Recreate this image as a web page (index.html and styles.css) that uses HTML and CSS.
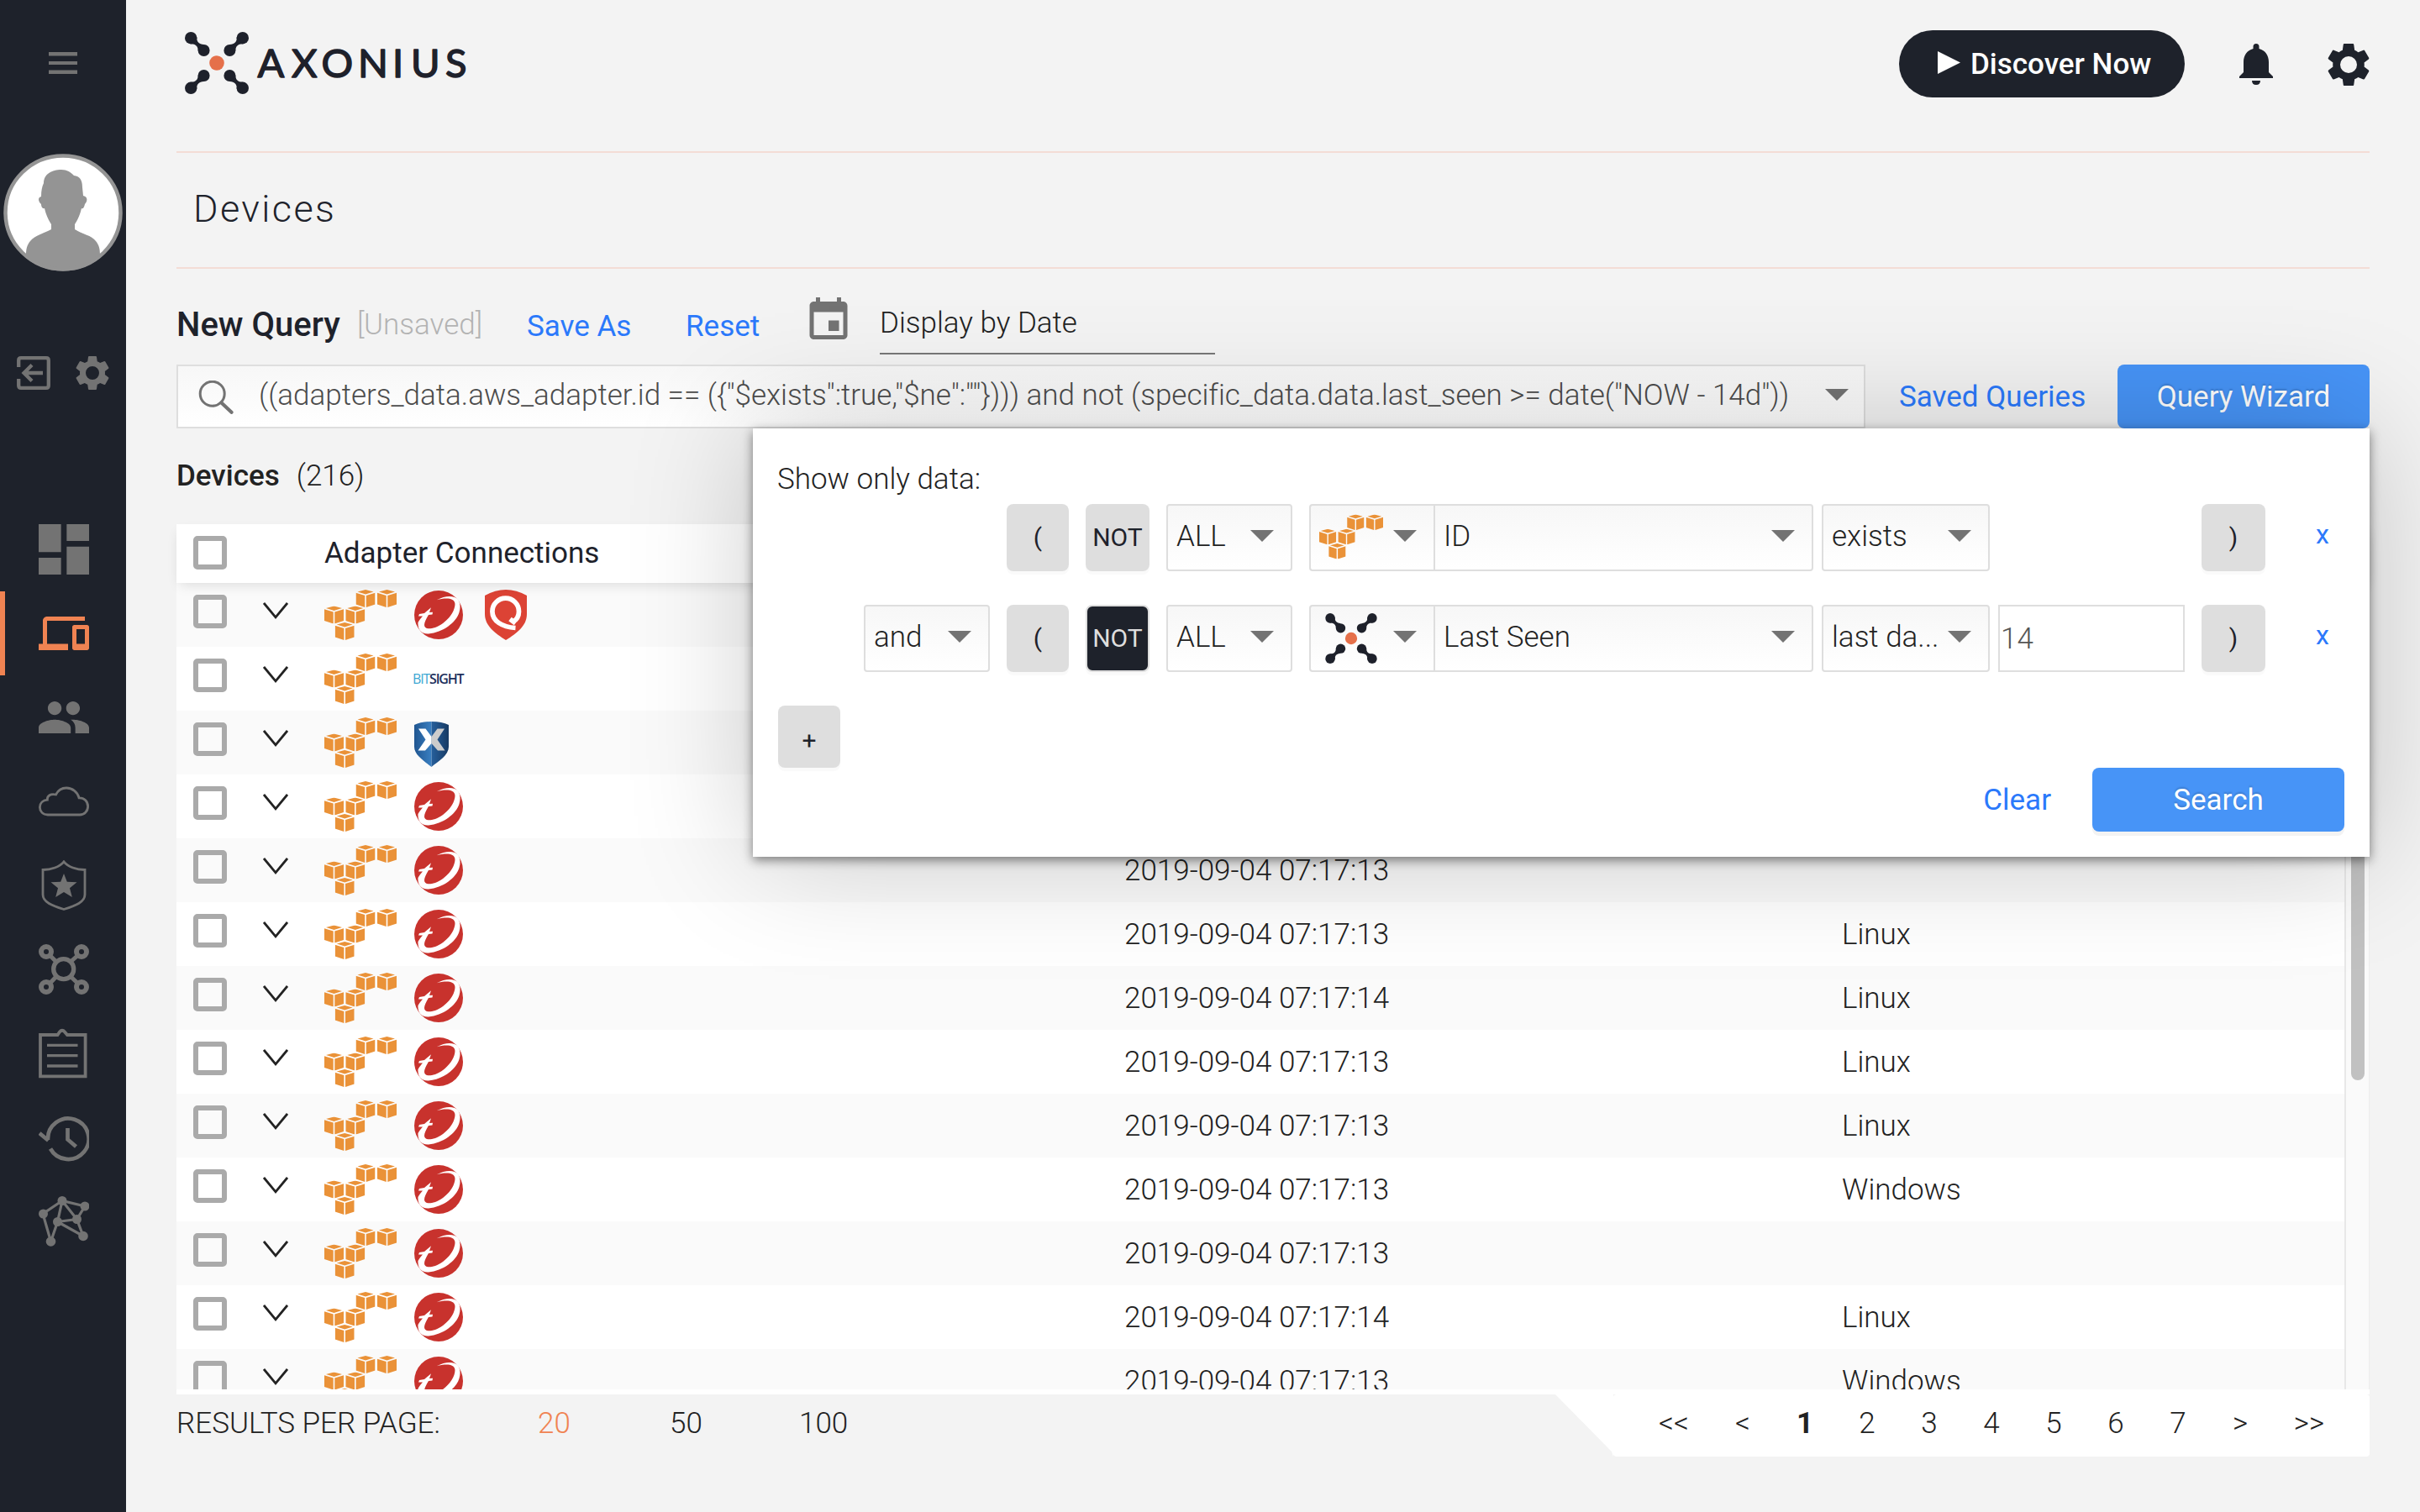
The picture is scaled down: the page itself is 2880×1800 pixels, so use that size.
FILE: index.html
```html
<!DOCTYPE html>
<html lang="en">
<head>
<meta charset="utf-8">
<title>Axonius - Devices</title>
<link rel="stylesheet" href="styles.css">
</head>
<body>
<svg class="sprite" aria-hidden="true">
  <defs>
    <linearGradient id="navy-left" x1="0" y1="0" x2="1" y2="0"><stop offset="0" stop-color="#1f5590"/><stop offset="1" stop-color="#3a80c2"/></linearGradient>
    <linearGradient id="navy-right" x1="0" y1="0" x2="1" y2="0"><stop offset="0" stop-color="#265f9c"/><stop offset="1" stop-color="#173a63"/></linearGradient>
  </defs>
  <symbol id="gear" viewBox="2 2 20 20"><path fill-rule="evenodd" d="M19.43 12.98c.04-.32.07-.64.07-.98s-.03-.66-.07-.98l2.11-1.65c.19-.15.24-.42.12-.64l-2-3.46c-.12-.22-.39-.3-.61-.22l-2.49 1c-.52-.4-1.08-.73-1.69-.98l-.38-2.65C14.46 2.18 14.25 2 14 2h-4c-.25 0-.46.18-.49.42l-.38 2.65c-.61.25-1.17.59-1.69.98l-2.49-1c-.23-.09-.49 0-.61.22l-2 3.46c-.13.22-.07.49.12.64l2.11 1.65c-.04.32-.07.65-.07.98s.03.66.07.98l-2.11 1.65c-.19.15-.24.42-.12.64l2 3.46c.12.22.39.3.61.22l2.49-1c.52.4 1.08.73 1.69.98l.38 2.65c.03.24.24.42.49.42h4c.25 0 .46-.18.49-.42l.38-2.65c.61-.25 1.17-.59 1.69-.98l2.49 1c.23.09.49 0 .61-.22l2-3.46c.12-.22.07-.49-.12-.64l-2.11-1.65zM12 16a4 4 0 1 1 0-8 4 4 0 0 1 0 8z"/></symbol>
  <symbol id="arm" viewBox="0 0 38 37"><circle cx="7.2" cy="7.2" r="7.2"/><circle cx="22.6" cy="22" r="7"/><path d="M14.3 6C13.600 12 17 14.500 22.500 15L15.600 22.500C15.800 17 12.500 14 6.500 14.300Z"/></symbol>
  <symbol id="ax-mark" viewBox="0 0 76 74">
    <g fill="#1e212b">
      <use href="#arm" width="38" height="37"/>
      <use href="#arm" width="38" height="37" transform="translate(76 0) scale(-1 1)"/>
      <use href="#arm" width="38" height="37" transform="translate(0 74) scale(1 -1)"/>
      <use href="#arm" width="38" height="37" transform="translate(76 74) scale(-1 -1)"/>
    </g>
    <circle cx="38" cy="37" r="8.800" fill="#e5704a"/>
  </symbol>
  <symbol id="cube" viewBox="0 0 23 21"><path d="M11.500 0L21 2.500L11.500 5.400L2 2.500ZM0 3.800L10.700 7V21L0 17.600ZM23 3.800L12.300 7V21L23 17.600Z"/></symbol>
  <symbol id="aws" viewBox="0 0 86 60"><g fill="#ea9238">
    <use href="#cube" x="37.500" y="0" width="23" height="21"/><use href="#cube" x="63" y="0" width="23" height="21"/>
    <use href="#cube" x="0" y="19.500" width="23" height="21"/><use href="#cube" x="25.300" y="19.500" width="23" height="21"/>
    <use href="#cube" x="12.700" y="39" width="23" height="21"/></g></symbol>
  <symbol id="trend" viewBox="0 0 58 58"><circle cx="29" cy="29" r="29" fill="#c8322d"/><path fill="#fff" d="M26.700 11.300C35 7 42 6 48 8C54 10 56 18 53.500 26C50 38 34 50 17 51.500C8 52 4 46 4.500 38C6 35 8 33 10 30.500L5 30.500L6 28L12 27L20 20.300L18 26L22 25.700L21.500 28.500L17 29C14 34 12 38 12 41C12 45.500 17 46.500 25 44C38 39 48.500 26 48.500 16C48 8.500 37 8.500 26.700 11.300Z"/></symbol>
  <symbol id="qshield" viewBox="0 0 50 60"><path fill="#dc4335" d="M0 7Q25 -7 50 7V29C50 43 38 52 25 60C12 52 0 43 0 29Z"/><path fill="none" stroke="#fff" stroke-width="5.700" d="M30 35L36.500 40M33 38.500C38 36 40.500 31 40.500 26A15.800 15.800 0 1 0 8.900 26C9 37 20 44.500 36.500 45.500"/></symbol>
  <symbol id="nexpose" viewBox="0 0 41 54"><path fill="url(#navy-left)" d="M20.500 0Q8 0 0 4V30C0 40 12 47 20.500 54Z"/><path fill="url(#navy-right)" d="M20.500 0Q33 0 41 4V30C41 40 29 47 20.500 54Z"/><path fill="#fff" d="M5 8.500H13.500L20.500 18V26L13 34.500H4.500L13.500 21.500Z"/><path fill="#ccc" d="M36 8.500H27.500L20.500 18V26L28 34.500H36.500L27.500 21.500Z"/></symbol>
  <symbol id="chevron" viewBox="0 0 30 20"><path fill="none" stroke="#222" stroke-width="2.800" d="M1 1L15 17.800L29 1"/></symbol>
  <symbol id="caret" viewBox="0 0 28 14"><path fill="#737373" d="M0 0H28L14 14Z"/></symbol>
</svg>
<div class="app">
  <aside class="sidebar">
    <svg class="menu" viewBox="0 0 34 26"><path d="M0 0H34V4.500H0ZM0 11H34V15H0ZM0 21.500H34V26H0Z"/></svg>
    <svg class="avatar" viewBox="0 0 142 140"><defs><clipPath id="face"><ellipse cx="71" cy="70" rx="70" ry="69.500"/></clipPath></defs><ellipse cx="71" cy="70" rx="68.700" ry="67.700" fill="#fff"/><path clip-path="url(#face)" fill="#949494" d="M48 35C48 24 58 19 69 19C76 19 80 22 84 26C91 27 94 31 94 40L95 50C101 51 100 57 97 60C96 64 95 66 93 65C91 74 88 79 85 84V90C94 96 105 97 110 104C114 109 115 113 115 121V140H27V121C27 113 28 109 32 104C38 97 48 95 57 90V84C54 79 51 74 49 65C46 66 45 62 45 60C41 56 41 52 45 51C45 44 46 39 48 35Z"/><ellipse cx="71" cy="70" rx="68.500" ry="67.500" fill="none" stroke="#949494" stroke-width="4.500"/></svg>
    <div class="account">
      <svg viewBox="0 0 40 40"><path fill="none" stroke="#737373" stroke-width="4.300" d="M2.200 13V5Q2.200 2.200 5 2.200H35Q37.800 2.200 37.800 5V35Q37.800 37.800 35 37.800H5Q2.200 37.800 2.200 35V27M31 20H8M18 10.500L8.500 20L18 29.500"/></svg>
      <svg><use href="#gear"/></svg>
    </div>
    <nav class="nav">
      <a><svg viewBox="3 3 18 18"><path d="M3 13h8V3H3v10zm0 8h8v-6H3v6zm10 0h8V11h-8v10zm0-18v6h8V3h-8z"/></svg></a>
      <a class="active"><svg viewBox="0 0 24 24"><path d="M4 6h18V4H4c-1.100 0-2 .9-2 2v11H0v3h14v-3H4V6zm19 2h-6c-.55 0-1 .45-1 1v10c0 .55.45 1 1 1h6c.55 0 1-.45 1-1V9c0-.55-.45-1-1-1zm-1 9h-4v-7h4v7z"/></svg></a>
      <a><svg viewBox="1 1 22 22"><path d="M16 11c1.660 0 2.990-1.340 2.990-3S17.660 5 16 5c-1.660 0-3 1.340-3 3s1.340 3 3 3zm-8 0c1.660 0 2.990-1.340 2.990-3S9.660 5 8 5C6.340 5 5 6.340 5 8s1.340 3 3 3zm0 2c-2.330 0-7 1.170-7 3.500V19h14v-2.500c0-2.330-4.670-3.500-7-3.500zm8 0c-.29 0-.62.02-.97.05 1.160.84 1.970 1.970 1.970 3.450V19h6v-2.500c0-2.330-4.670-3.500-7-3.500z"/></svg></a>
      <a><svg class="line" viewBox="0 0 60 60"><path stroke-width="2.800" d="M11 46C5 46 1.400 42 1.400 37C1.400 32 5 28.800 10.300 28.200C10 23.500 14 20.500 20.500 22C23 17 28 14 33 14C40 14 46.500 19 48 25.800C54 25.500 58.600 30 58.600 36C58.600 42 54 46 49 46Z"/></svg></a>
      <a><svg class="line" viewBox="0 0 60 60"><path stroke-width="2.800" d="M30 1.800C25 8 15 11.500 5 11.500V41C5 50 16 54 30 58.500C44 54 55 50 55 41V11.500C45 11.500 35 8 30 1.800Z"/><path class="solid" d="M30 16L33.800 25.800L45.500 26.300L37 33.200L39.800 44L30 38L20.200 44L23 33.200L14.500 26.300L26.200 25.800Z"/></svg></a>
      <a><svg class="line" viewBox="0 0 60 60"><g stroke-width="6"><circle cx="9" cy="9" r="6"/><circle cx="51" cy="9" r="6"/><circle cx="9" cy="51" r="6"/><circle cx="51" cy="51" r="6"/><circle cx="29.700" cy="29.700" r="12" stroke-width="5.300"/><path stroke-width="5" d="M13 13L21 21M47 13L38 21M13 47L21 38.500M47 47L38 38.500"/></g></svg></a>
      <a><svg class="line" viewBox="0 0 60 60"><path stroke-width="3.800" d="M2 8H22.500L25 4.500Q28 1 31 4.500L34 8H55.600V57.300H2Z"/><path stroke-width="3.300" d="M10 20.300H46.500M10 32.700H46.500M10 45H46.500"/></svg></a>
      <a><svg class="line" viewBox="0 0 60 60"><path stroke-width="4.700" d="M11 33A24.300 24.300 0 1 1 14 43.500M1 25L11.500 33.800M34.500 19V32.500L44.500 41"/></svg></a>
      <a><svg class="line" viewBox="0 0 60 60"><path stroke-width="3.200" d="M28 5.500L5 21L14.500 54L22.500 30.500L28 5.500L55 12L45.500 27.500L28 5.500M22.500 30.500L45.500 27.500L53 47.500L22.500 30.500"/><g class="solid"><circle cx="28" cy="5.500" r="5.500"/><circle cx="55" cy="12" r="5.500"/><circle cx="5.500" cy="21" r="5.500"/><circle cx="22.500" cy="30.500" r="5.500"/><circle cx="45.500" cy="27.500" r="5.500"/><circle cx="53" cy="47.500" r="5.800"/><circle cx="14.500" cy="54" r="5.800"/></g></svg></a>
    </nav>
  </aside>
  <main class="main">
    <header class="topbar">
      <svg class="logo" viewBox="0 0 340 74"><use href="#ax-mark" width="76" height="74"/><text x="86.500 127 162.500 206 247 269 310" y="54">AXONIUS</text></svg>
      <div class="top-actions">
        <button class="discover"><svg viewBox="0 0 27 27"><path d="M0 0L27 13.500L0 27Z"/></svg>Discover Now</button>
        <svg class="bell" viewBox="0 0 40 49"><path d="M16.500 6V3.500Q16.500 0 20 0Q23.500 0 23.500 3.500V6C31 8 35 14 35 22V34L40 39V41H0V39L5 34V22C5 14 9 8 16.500 6ZM15 44H25Q25 49 20 49Q15 49 15 44Z"/></svg>
        <svg class="cog"><use href="#gear"/></svg>
      </div>
    </header>
    <h1 class="title">Devices</h1>
    <section class="query-head">
      <span class="query-name">New Query</span>
      <span class="unsaved">[Unsaved]</span>
      <a class="link">Save As</a>
      <a class="link">Reset</a>
      <svg class="calendar" viewBox="3 1 18 20"><path d="M17 12h-5v5h5v-5zM16 1v2H8V1H6v2H5c-1.110 0-1.990.9-1.990 2L3 19c0 1.100.89 2 2 2h14c1.100 0 2-.9 2-2V5c0-1.100-.9-2-2-2h-1V1h-2zm3 18H5V8h14v11z"/></svg>
      <span class="date-field">Display by Date</span>
    </section>
    <section class="query-bar">
      <div class="search">
        <svg class="lens" viewBox="0 0 42 40"><circle cx="16.700" cy="15.700" r="14.500" stroke-width="3"/><path stroke-width="4.200" stroke-linecap="round" d="M27.500 26.500L39.500 37.800"/></svg>
        <span class="query-text">((adapters_data.aws_adapter.id == ({"$exists":true,"$ne":""}))) and not (specific_data.data.last_seen &gt;= date("NOW - 14d"))</span>
        <svg class="caret"><use href="#caret"/></svg>
      </div>
      <a class="link saved">Saved Queries</a>
      <button class="primary">Query Wizard</button>
      <div class="wizard">
        <div class="wizard-title">Show only data:</div>
        <div class="expression">
          <span></span>
          <button class="tog">(</button>
          <button class="tog">NOT</button>
          <div class="select">ALL<svg class="caret"><use href="#caret"/></svg></div>
          <div class="field">
            <div class="select adapter"><svg class="aws-small"><use href="#aws"/></svg><svg class="caret"><use href="#caret"/></svg></div>
            <div class="select">ID<svg class="caret"><use href="#caret"/></svg></div>
          </div>
          <div class="select">exists<svg class="caret"><use href="#caret"/></svg></div>
          <span></span>
          <button class="tog">)</button>
          <a class="remove">x</a>
        </div>
        <div class="expression">
          <div class="select">and<svg class="caret"><use href="#caret"/></svg></div>
          <button class="tog">(</button>
          <button class="tog on">NOT</button>
          <div class="select">ALL<svg class="caret"><use href="#caret"/></svg></div>
          <div class="field">
            <div class="select adapter"><svg class="ax-small"><use href="#ax-mark"/></svg><svg class="caret"><use href="#caret"/></svg></div>
            <div class="select">Last Seen<svg class="caret"><use href="#caret"/></svg></div>
          </div>
          <div class="select">last da...<svg class="caret"><use href="#caret"/></svg></div>
          <div class="value">14</div>
          <button class="tog">)</button>
          <a class="remove">x</a>
        </div>
        <button class="tog add">+</button>
        <div class="wizard-actions"><a class="link">Clear</a><button class="primary">Search</button></div>
      </div>
    </section>
    <div class="count"><b>Devices</b><span>(216)</span></div>
    <section class="table">
      <div class="row head"><i class="box"></i><span></span><span class="col-name">Adapter Connections</span></div>
      <div class="viewport">
        <div class="rows">
          <div class="row"><i class="box"></i><svg class="chev"><use href="#chevron"/></svg><div class="adapters"><svg class="aws"><use href="#aws"/></svg><svg class="trend"><use href="#trend"/></svg><svg class="qshield"><use href="#qshield"/></svg></div><span></span><span></span></div>
          <div class="row"><i class="box"></i><svg class="chev"><use href="#chevron"/></svg><div class="adapters"><svg class="aws"><use href="#aws"/></svg><span class="bitsight"><span class="bit">BIT</span><span class="sight">SIGHT</span></span></div><span></span><span></span></div>
          <div class="row"><i class="box"></i><svg class="chev"><use href="#chevron"/></svg><div class="adapters"><svg class="aws"><use href="#aws"/></svg><svg class="nexpose"><use href="#nexpose"/></svg></div><span></span><span></span></div>
          <div class="row"><i class="box"></i><svg class="chev"><use href="#chevron"/></svg><div class="adapters"><svg class="aws"><use href="#aws"/></svg><svg class="trend"><use href="#trend"/></svg></div><span></span><span></span></div>
          <div class="row"><i class="box"></i><svg class="chev"><use href="#chevron"/></svg><div class="adapters"><svg class="aws"><use href="#aws"/></svg><svg class="trend"><use href="#trend"/></svg></div><span>2019-09-04 07:17:13</span><span></span></div>
          <div class="row"><i class="box"></i><svg class="chev"><use href="#chevron"/></svg><div class="adapters"><svg class="aws"><use href="#aws"/></svg><svg class="trend"><use href="#trend"/></svg></div><span>2019-09-04 07:17:13</span><span>Linux</span></div>
          <div class="row"><i class="box"></i><svg class="chev"><use href="#chevron"/></svg><div class="adapters"><svg class="aws"><use href="#aws"/></svg><svg class="trend"><use href="#trend"/></svg></div><span>2019-09-04 07:17:14</span><span>Linux</span></div>
          <div class="row"><i class="box"></i><svg class="chev"><use href="#chevron"/></svg><div class="adapters"><svg class="aws"><use href="#aws"/></svg><svg class="trend"><use href="#trend"/></svg></div><span>2019-09-04 07:17:13</span><span>Linux</span></div>
          <div class="row"><i class="box"></i><svg class="chev"><use href="#chevron"/></svg><div class="adapters"><svg class="aws"><use href="#aws"/></svg><svg class="trend"><use href="#trend"/></svg></div><span>2019-09-04 07:17:13</span><span>Linux</span></div>
          <div class="row"><i class="box"></i><svg class="chev"><use href="#chevron"/></svg><div class="adapters"><svg class="aws"><use href="#aws"/></svg><svg class="trend"><use href="#trend"/></svg></div><span>2019-09-04 07:17:13</span><span>Windows</span></div>
          <div class="row"><i class="box"></i><svg class="chev"><use href="#chevron"/></svg><div class="adapters"><svg class="aws"><use href="#aws"/></svg><svg class="trend"><use href="#trend"/></svg></div><span>2019-09-04 07:17:13</span><span></span></div>
          <div class="row"><i class="box"></i><svg class="chev"><use href="#chevron"/></svg><div class="adapters"><svg class="aws"><use href="#aws"/></svg><svg class="trend"><use href="#trend"/></svg></div><span>2019-09-04 07:17:14</span><span>Linux</span></div>
          <div class="row"><i class="box"></i><svg class="chev"><use href="#chevron"/></svg><div class="adapters"><svg class="aws"><use href="#aws"/></svg><svg class="trend"><use href="#trend"/></svg></div><span>2019-09-04 07:17:13</span><span>Windows</span></div>
        </div>
        <div class="track"><div class="thumb"></div></div>
      </div>
    </section>
    <footer class="footer">
      <div class="sizes"><span>RESULTS PER PAGE:</span><span class="current">20</span><span>50</span><span>100</span></div>
      <div class="slant"></div>
      <div class="pages"><a>&lt;&lt;</a><a>&lt;</a><a class="current">1</a><a>2</a><a>3</a><a>4</a><a>5</a><a>6</a><a>7</a><a>&gt;</a><a>&gt;&gt;</a></div>
    </footer>
  </main>
</div>
</body>
</html>
```
FILE: styles.css
```css
* { box-sizing: border-box; }
body { margin: 0; background: #f3f3f3; color: #222; font: 300 35px/40px Roboto, sans-serif; }
button { border: 0; margin: 0; padding: 0; font: inherit; color: inherit; }
svg { display: block; flex: none; }
.sprite { position: absolute; width: 0; height: 0; }
.app { display: flex; width: 2880px; height: 1800px; overflow: hidden; }

/* sidebar */
.sidebar { width: 150px; flex: none; background: #1e222b; fill: #737373; display: flex; flex-direction: column; align-items: center; }
.menu { width: 34px; height: 26px; margin-top: 62px; }
.avatar { width: 142px; height: 140px; margin-top: 95px; }
.account { display: flex; gap: 30px; margin-top: 101px; }
.account svg { width: 40px; height: 40px; }
.nav { width: 150px; margin-top: 140px; }
.nav a { display: flex; height: 100px; align-items: center; padding-left: 40px; border-left: 6px solid transparent; }
.nav .active { border-color: #f08352; fill: #f08352; }
.nav svg { width: 60px; height: 60px; }
.line { fill: none; stroke: #737373; }
.solid { fill: #737373; stroke: none; }

/* header */
.main { flex: 1; padding: 0 60px; min-width: 0; display: flex; flex-direction: column; }
.topbar { height: 182px; flex: none; display: flex; justify-content: space-between; padding: 36px 0 0 10px; border-bottom: 2px solid #f3dcd5; }
.logo { width: 340px; height: 74px; margin-top: 2px; }
.logo text { font: 400 47px Lato, sans-serif; fill: #1e212b; stroke: #1e212b; stroke-width: 1.5px; stroke-linejoin: round; }
.top-actions { display: flex; }
.discover { width: 340px; height: 80px; border-radius: 40px; background: #1e222b; color: #fff; font-weight: 500; font-size: 35px; display: flex; align-items: center; padding: 2px 0 0 46px; gap: 12px; }
.discover svg { width: 27px; height: 27px; fill: #fff; margin-top: -5px; }
.bell { width: 40px; height: 49px; margin: 16px 65px 0; fill: #1e222b; }
.cog { width: 50px; height: 50px; margin-top: 16px; fill: #1e222b; }
.title { margin: 0; height: 138px; flex: none; border-bottom: 2px solid #f3dcd5; padding: 44px 0 0 20px; font: 300 45px/45px Roboto, sans-serif; letter-spacing: 2.400px; color: #1e222b; }

/* query */
.query-head { height: 114px; flex: none; display: grid; grid-template-columns: 215px 202px 189px 147px 84px 399px; align-items: start; }
.query-name { font-weight: 500; font-size: 40px; margin-top: 47px; color: #1e222b; white-space: nowrap; }
.unsaved { color: #b3b3b3; margin-top: 47px; }
.link { color: #2b79fb; font-weight: 400; }
.query-head .link { margin-top: 49px; }
.calendar { width: 46px; height: 50px; margin-top: 34px; fill: #737373; }
.date-field { height: 57px; margin-top: 45px; border-bottom: 2px solid #777; }
.query-bar { position: relative; height: 76px; flex: none; display: flex; }
.search { width: 2010px; border: 2px solid #dedede; background: linear-gradient(#f7f7f7, #fff); display: flex; align-items: center; padding: 0 18px 0 24px; color: #4c4c4c; }
.lens { width: 42px; height: 40px; margin: 1px 30px 0 0; fill: none; stroke: #737373; }
.query-text { flex: 1; white-space: nowrap; margin-top: -3px; letter-spacing: -.015px; }
.caret { width: 28px; height: 14px; margin-left: auto; margin-top: -5px; }
.saved { width: 300px; padding-left: 40px; line-height: 78px; }
.primary { width: 300px; height: 76px; padding: 2px 0 0; border-radius: 8px; background: #4794f7; color: #fff; font-weight: 400; text-shadow: 0 -2px 2px rgba(0, 0, 0, .15); }

.wizard { position: absolute; z-index: 2; top: 76px; right: 0; width: 1924px; height: 510px; padding: 41px 30px 0; background: #fff; box-shadow: 0 4px 12px rgba(0, 0, 0, .48), 0 0 140px rgba(0, 0, 0, .2); }
.wizard-title { height: 49px; margin-left: -1px; }
.expression { display: grid; grid-template-columns: 170px 94px 96px 170px 610px 210px 242px 136px 40px; padding-left: 102px; height: 80px; margin-bottom: 40px; }
.expression > .select { width: 150px; }
.expression > :nth-child(5) { width: 600px; }
.expression > :nth-child(6) { width: 200px; }
.select { display: flex; align-items: center; height: 80px; border: 2px solid #dedede; border-radius: 4px; background: linear-gradient(#f7f7f7, #fff); padding: 0 20px 2px 10px; white-space: nowrap; }
.select .caret { margin-top: -3px; }
.field { display: flex; }
.field .select { flex: 1; border-radius: 0 4px 4px 0; }
.field .adapter { flex: none; width: 148px; border-right: 0; border-radius: 4px 0 0 4px; }
.aws-small { width: 76px; height: 54px; }
.ax-small { width: 62px; height: 60px; margin: 2px 0 0 7px; }
.tog { width: 74px; height: 80px; border-radius: 8px; background: #dedede; color: #1e222b; font-weight: 400; font-size: 30px; box-shadow: 0 4px 0 #fafafa; }
.expression > :nth-child(3), .expression > :nth-child(8) { width: 76px; }
.tog.on { background: #1e222b; color: #dedede; border: 2px solid #dedede; }
.value { width: 222px; height: 80px; border: 2px solid #dedede; line-height: 77px; padding-left: 1px; color: #555; }
.remove { color: #2b79fb; font-weight: 400; font-size: 32px; line-height: 73px; }
.add { display: block; height: 74px; padding-top: 9px; }
.wizard-actions { display: flex; justify-content: flex-end; }
.wizard-actions .link { margin-right: 49px; line-height: 78px; }
.wizard-actions .primary { box-shadow: 0 5px 0 #f3f3f3; }

/* table */
.count { height: 114px; flex: none; display: flex; gap: 20px; padding-top: 37px; }
.count b { font-weight: 500; }
.table { height: 1036px; flex: none; background: #fff; }
.row { display: grid; grid-template-columns: 83px 73px 952px 854px 1fr; padding-left: 20px; height: 76px; line-height: 77px; }
.row:nth-child(odd) { background: #fafafa; }
.row.head { position: relative; z-index: 1; height: 70px; line-height: 69px; background: #fff; box-shadow: 0 6px 14px -4px rgba(0, 0, 0, .13); }
.col-name { font-weight: 400; color: #1e222b; }
.box { width: 40px; height: 40px; margin-top: 14px; border: 6px solid #aaa; border-radius: 5px; }
.chev { width: 30px; height: 20px; margin-top: 23px; }
.adapters { display: flex; align-items: flex-start; }
.aws { width: 86px; height: 60px; margin: 8px 21px 0 0; }
.trend { width: 58px; height: 58px; margin: 9px 26px 0 0; }
.qshield { width: 50px; height: 60px; margin-top: 8px; }
.bitsight { font: 400 16px/24px "Open Sans", sans-serif; margin: 26px 0 0 -2px; letter-spacing: -1.200px; }
.bit { color: #3ba7d3; }
.sight { color: #1c2f5c; font-weight: 600; }
.nexpose { width: 41px; height: 54px; margin-top: 13px; }
.viewport { display: flex; height: 960px; overflow: hidden; }
.rows { flex: 1; }
.track { width: 30px; background: #fafafa; border-left: 2px solid #e8e8e8; border-right: 1px solid #ededed; padding-left: 6px; }
.thumb { width: 16px; height: 592px; border-radius: 8px; background: #c1c1c1; }

/* footer */
.footer { display: flex; }
.sizes { width: 1641px; display: grid; grid-template-columns: 430px 157px 154px 100px; line-height: 69px; }
.sizes .current { color: #f08352; }
.slant { width: 69px; height: 74px; background: #fff; clip-path: polygon(0 0, 100% 0, 100% 74px, 97% 68px); }
.pages { width: 900px; height: 74px; background: #fff; border-radius: 4px; display: grid; grid-template-columns: 90px repeat(9, 74px) 90px; padding-left: 27px; text-align: center; line-height: 69px; }
.pages .current { font-weight: 700; }
```
